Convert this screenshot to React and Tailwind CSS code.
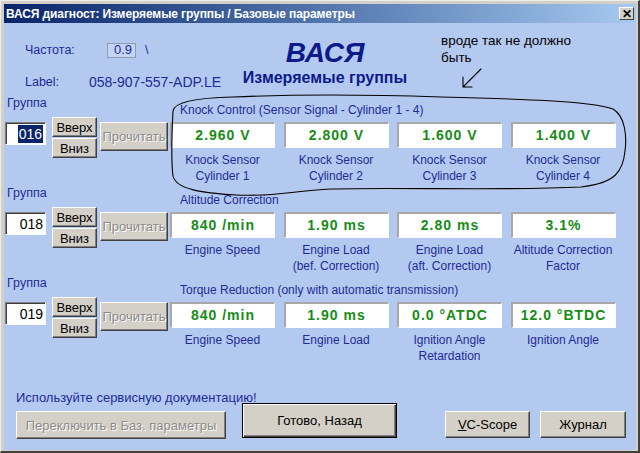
const blue = 'text-[#1e2b95]';

const groups = [
  {
    n: '016',
    sel: true,
    title: 'Knock Control (Sensor Signal - Cylinder 1 - 4)',
    cells: [
      ['2.960 V', 'Knock Sensor', 'Cylinder 1'],
      ['2.800 V', 'Knock Sensor', 'Cylinder 2'],
      ['1.600 V', 'Knock Sensor', 'Cylinder 3'],
      ['1.400 V', 'Knock Sensor', 'Cylinder 4'],
    ],
  },
  {
    n: '018',
    title: 'Altitude Correction',
    cells: [
      ['840 /min', 'Engine Speed'],
      ['1.90 ms', 'Engine Load', '(bef. Correction)'],
      ['2.80 ms', 'Engine Load', '(aft. Correction)'],
      ['3.1%', 'Altitude Correction', 'Factor'],
    ],
  },
  {
    n: '019',
    title: 'Torque Reduction (only with automatic transmission)',
    cells: [
      ['840 /min', 'Engine Speed'],
      ['1.90 ms', 'Engine Load'],
      ['0.0 °ATDC', 'Ignition Angle', 'Retardation'],
      ['12.0 °BTDC', 'Ignition Angle'],
    ],
  },
];

const Btn = ({ children, className = '', disabled }) => (
  <div
    className={`flex items-center justify-center bg-[#d4d0c8] border border-t-white border-l-white border-r-[#404040] border-b-[#404040] shadow-[inset_-1px_-1px_0_#808080] text-[13px] leading-none whitespace-nowrap ${
      disabled ? 'text-[#8a8a8a] [text-shadow:1px_1px_0_#fff]' : 'text-black'
    } ${className}`}
  >
    {children}
  </div>
);

const Group = ({ g }) => (
  <div className="flex h-[90px]">
    {/* left controls */}
    <div className="w-[166px] flex flex-col">
      <div className={`h-[22px] pl-[3px] pt-[1px] text-[12.5px] leading-[14px] ${blue}`}>Группа</div>
      <div className="flex items-start">
        <div className="ml-[1px] mt-[5px] w-[41px] h-[23px] bg-white border border-t-[#808080] border-l-[#808080] border-r-white border-b-white shadow-[inset_1px_1px_0_#404040] flex items-center justify-end pr-[2px] text-[14px] leading-none">
          {g.sel ? <span className="bg-[#0a246a] text-white px-[1px] py-[2px]">{g.n}</span> : <span>{g.n}</span>}
        </div>
        <div className="ml-[6px] flex flex-col gap-[1px]">
          <Btn className="w-[45px] h-[20px]">Вверх</Btn>
          <Btn className="w-[45px] h-[20px]">Вниз</Btn>
        </div>
        <Btn disabled className="ml-[3px] mt-[5px] w-[68px] h-[29px] text-[12.5px]">Прочитать</Btn>
      </div>
    </div>
    {/* right panel */}
    <div className="flex flex-col">
      <div className={`h-[22px] pl-[10px] pt-[8px] text-[12px] leading-[14px] whitespace-nowrap ${blue}`}>{g.title}</div>
      <div className="mt-[5px] flex gap-[8.5px]">
        {g.cells.map(([v, l1, l2]) => (
          <div key={l1 + v} className="w-[105px] flex flex-col items-center">
            <div className="w-[105px] h-[26px] bg-white border-t-2 border-l-2 border-r border-b border-t-[#a8a8a8] border-l-[#a8a8a8] border-r-white border-b-white flex items-center justify-center text-[14px] font-bold tracking-[1px] text-[#168c16] whitespace-nowrap">
              {v}
            </div>
            <div className={`mt-[4px] text-[12px] leading-[16px] text-center whitespace-nowrap ${blue}`}>
              <div>{l1}</div>
              {l2 && <div>{l2}</div>}
            </div>
          </div>
        ))}
      </div>
    </div>
  </div>
);

export default function App() {
  return (
    <div className="relative w-[640px] h-[453px] bg-[#d4d0c8] border-t border-l border-t-[#eeeeee] border-l-[#eeeeee] border-r-2 border-b-2 border-r-[#404040] border-b-[#404040] pt-[3px] pl-[3px] pr-[2px] pb-[1px] flex flex-col font-['Liberation_Sans',Arial,sans-serif] overflow-hidden">
      {/* title bar */}
      <div className="h-[19px] flex items-center bg-gradient-to-r from-[#0a246a] to-[#a6caf0] pl-[2px] pr-[2px]">
        <div className="text-white font-bold text-[12px] tracking-[-0.1px] leading-none whitespace-nowrap">
          ВАСЯ диагност: Измеряемые группы / Базовые параметры
        </div>
        <div className="ml-auto w-[15px] h-[13px] bg-[#d4d0c8] border border-t-white border-l-white border-r-[#404040] border-b-[#404040] flex items-center justify-center text-[12px] font-bold leading-none text-black">
          ✕
        </div>
      </div>

      {/* body */}
      <div className="flex-1 bg-[#b4c9f0] flex flex-col">
        {/* header */}
        <div className="h-[72px] flex">
          <div className={`w-[226px] pl-[21px] flex flex-col text-[12.5px] ${blue}`}>
            <div className="mt-[19px] h-[16px] flex items-center">
              <span className="w-[82px]">Частота:</span>
              <span className="w-[29px] h-[15px] border border-[#8f9bb0] bg-[#c4d4f2] flex items-center justify-end pr-[3px] text-[13px]">0.9</span>
              <span className="ml-[9px]">\</span>
            </div>
            <div className="mt-[16px] h-[16px] flex items-center">
              <span className="w-[64px]">Label:</span>
              <span className="text-[14px] whitespace-nowrap">058-907-557-ADP.LE</span>
            </div>
          </div>
          <div className="w-[190px] flex flex-col items-center text-[#0c1a8a]">
            <div className="mt-[14px] text-[28px] font-bold italic leading-[32px]">ВАСЯ</div>
            <div className="text-[16px] font-bold leading-[18px] whitespace-nowrap">Измеряемые группы</div>
          </div>
          <div className="ml-[21px] mt-[9px] text-[13.5px] leading-[17px] text-black">
            <div>вроде так не должно</div>
            <div>быть</div>
          </div>
        </div>

        {groups.map((g) => (
          <Group key={g.n} g={g} />
        ))}

        {/* bottom */}
        <div className="flex-1 flex items-end pb-[11px] pl-[12px]">
          <div className="w-[210px] flex flex-col">
            <div className={`text-[13px] leading-[14px] whitespace-nowrap ${blue}`}>Используйте сервисную документацию!</div>
            <Btn disabled className="mt-[6px] h-[28px]">Переключить в Баз. параметры</Btn>
          </div>
          <div className="ml-[16px] mb-[1px] w-[155px] h-[35px] flex items-center justify-center bg-[#d4d0c8] border border-black shadow-[inset_1px_1px_0_#fff,inset_-1px_-1px_0_#404040,inset_-2px_-2px_0_#808080] text-[13px] text-black">
            Готово, Назад
          </div>
          <Btn className="ml-[48px] mb-[1px] w-[85px] h-[27px]">
            <span className="underline">V</span>C-Scope
          </Btn>
          <Btn className="ml-[10px] mb-[1px] w-[86px] h-[27px]">Журнал</Btn>
        </div>
      </div>

      {/* hand drawn annotation */}
      <svg className="absolute left-0 top-0 pointer-events-none" width="640" height="453" viewBox="0 0 640 453" fill="none" stroke="#000" strokeWidth="1.1" strokeLinecap="round">
        <path d="M232 96 C300 93 380 94 440 96 C520 98 590 100 612 108 C624 115 626 135 624 150 C622 170 615 182 580 186 C500 190 400 186 330 188 C290 190 272 196 235 194 C200 192 175 188 172 175 C170 160 171 130 172 110 C173 102 190 97 232 96 Z" />
        <path d="M480 68 L462 86 M462 86 L462 76 M462 86 L471 86" />
      </svg>
    </div>
  );
}
